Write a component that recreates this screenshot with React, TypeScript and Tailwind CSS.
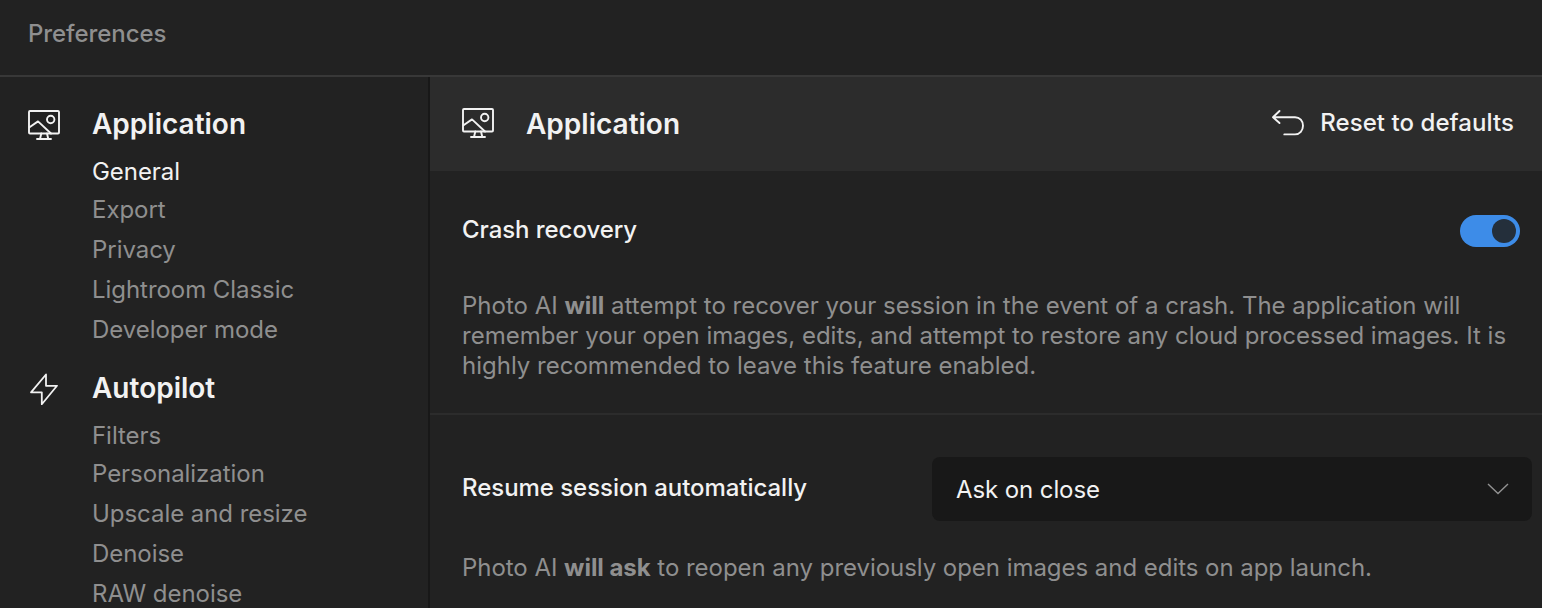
import React, { useState } from 'react';
import clsx from 'clsx';

const SECTIONS = [
  { title: 'Application', icon: MonitorIcon, items: ['General', 'Export', 'Privacy', 'Lightroom Classic', 'Developer mode'] },
  { title: 'Autopilot', icon: BoltIcon, items: ['Filters', 'Personalization', 'Upscale and resize', 'Denoise', 'RAW denoise'] },
];

function MonitorIcon() {
  return (
    <svg width="34" height="32" viewBox="0 0 34 32" fill="none" stroke="currentColor" strokeWidth="1.9" strokeLinecap="round" strokeLinejoin="round" className="shrink-0">
      <rect x="2" y="2" width="30" height="22.5" rx="1" />
      <path d="M2.5 18.2L11 12.4L24 24.5M14.3 24.5L13 30M20 24.5L21.3 30M10 30H24" />
      <circle cx="23.7" cy="10.5" r="3.7" />
    </svg>
  );
}

function BoltIcon() {
  return (
    <svg width="34" height="34" viewBox="0 0 34 34" fill="none" stroke="currentColor" strokeWidth="1.8" strokeLinejoin="round" className="shrink-0">
      <path d="M19 2.5L4 20.3H14.8V32.2L30 13.8H19Z" />
    </svg>
  );
}

function UndoIcon() {
  return (
    <svg width="34" height="28" viewBox="0 0 34 28" fill="none" stroke="currentColor" strokeWidth="1.9" strokeLinecap="round" strokeLinejoin="round" className="shrink-0">
      <path d="M8.5 2L2 8.2L8.5 14M2 8.2H24C28.8 8.2 32 12 32 16.8C32 21.6 28.8 25.4 24 25.4H13.3" />
    </svg>
  );
}

function Toggle() {
  const [on, setOn] = useState(true);
  return (
    <button
      role="switch"
      aria-checked={on}
      aria-label="Crash recovery"
      onClick={() => setOn(!on)}
      className={clsx('flex h-8 w-[60px] items-center rounded-full px-1', on ? 'justify-end bg-[#3d8ce8]' : 'bg-[#444]')}
    >
      <span className="size-6 rounded-full bg-[#242f3b]" />
    </button>
  );
}

export default function App() {
  const [active, setActive] = useState('General');

  return (
    <div className="flex h-[608px] w-full flex-col overflow-hidden bg-[#222] font-['Inter',sans-serif] text-2xl text-[#f2f2f2]">
      <header className="h-[77px] shrink-0 border-b-2 border-[#383838] pl-7 pt-[19px] font-medium leading-[30px] tracking-[-0.07px] text-[#8f8f8f]">
        Preferences
      </header>

      <div className="flex min-h-0 flex-1">
        <nav className="w-[430px] shrink-0 overflow-hidden border-r-2 border-[#181818] pl-[27px] pt-6">
          {SECTIONS.map(({ title, icon: Icon, items }) => (
            <section key={title} className="mb-[14px]">
              <div className="flex h-12 items-center gap-[31px]">
                <Icon />
                <h2 className="pb-0.5 text-[28px] font-semibold leading-[46px]">{title}</h2>
              </div>
              <ul className="pl-[65px] pt-1 tracking-[-0.05px]">
                {items.map((item) => (
                  <li key={item} className="h-10 first:h-[38px]">
                    <button
                      onClick={() => setActive(item)}
                      className={clsx('leading-[38px]', item === active ? 'text-[#f2f2f2]' : 'text-[#8f8f8f]')}
                    >
                      {item}
                    </button>
                  </li>
                ))}
              </ul>
            </section>
          ))}
        </nav>

        <main className="min-w-0 flex-1">
          <div className="flex h-[94px] items-center justify-between bg-[#2c2c2c] pb-0.5 pl-[31px] pr-7">
            <div className="flex items-center gap-[31px]">
              <MonitorIcon />
              <h1 className="pt-1 text-[28px] font-semibold">Application</h1>
            </div>
            <button className="flex items-center gap-[15px] font-medium tracking-[0.06px]">
              <UndoIcon />
              Reset to defaults
            </button>
          </div>

          <section className="h-[244px] border-b-2 border-[#2c2c2c] pl-8 pt-11">
            <div className="flex h-8 items-center justify-between pr-[22px]">
              <h3 className="pb-0.5 font-medium tracking-[-0.06px]">Crash recovery</h3>
              <Toggle />
            </div>
            <p className="mt-11 leading-[30px] text-[#8f8f8f]">
              Photo AI <b className="font-bold">will</b> attempt to recover your session in the event of a crash. The application will
              <br />
              remember your open images, edits, and attempt to restore any cloud processed images. It is
              <br />
              highly recommended to leave this feature enabled.
            </p>
          </section>

          <section className="pl-8 pt-[42px]">
            <div className="flex h-16 items-center justify-between pr-2.5">
              <h3 className="pb-0.5 font-medium tracking-[-0.04px]">Resume session automatically</h3>
              <button className="flex h-16 w-[600px] items-center justify-between rounded-lg bg-[#181818] pl-6 pr-[23px] tracking-[-0.1px]">
                <span className="pt-0.5">Ask on close</span>
                <svg width="22" height="12" viewBox="0 0 22 12" fill="none" stroke="#929292" strokeWidth="1.4">
                  <path d="M1 1L11 10.5L21 1" />
                </svg>
              </button>
            </div>
            <p className="mt-8 leading-[30px] tracking-[-0.04px] text-[#8f8f8f]">
              Photo AI <b className="font-bold">will ask</b> to reopen any previously open images and edits on app launch.
            </p>
          </section>
        </main>
      </div>
    </div>
  );
}
